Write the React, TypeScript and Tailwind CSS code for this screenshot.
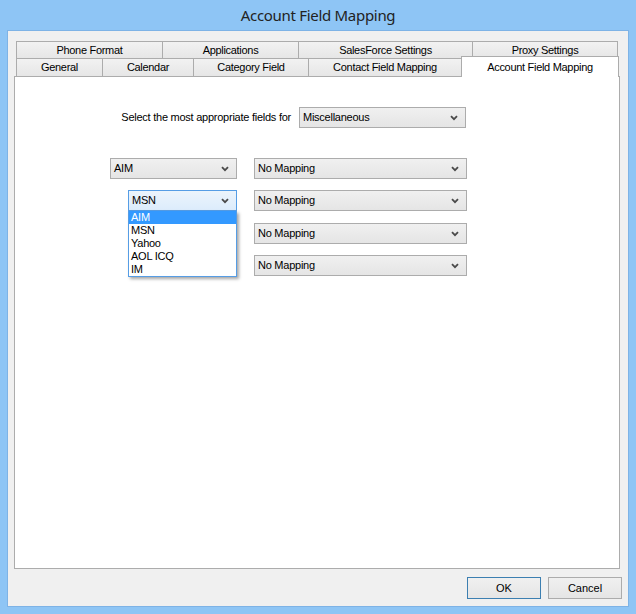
import React from "react";

const ui = { fontFamily: '"Liberation Sans", Arial, sans-serif' } as React.CSSProperties;

function Chevron() {
  return (
    <svg width="8" height="6" viewBox="0 0 8 6" className="shrink-0">
      <path d="M1 1.2 L4 4.2 L7 1.2" fill="none" stroke="#4a4a4a" strokeWidth="1.8" />
    </svg>
  );
}

function Select({ label, w, focused }: { label: string; w: string; focused?: boolean }) {
  return (
    <div
      className={`${w} h-[21px] flex items-center justify-between pl-[3px] pr-[7px] border ${
        focused
          ? "border-[#569de5] bg-gradient-to-b from-[#ecf4fc] to-[#dcecfc]"
          : "border-[#acacac] bg-gradient-to-b from-[#f0f0f0] to-[#e5e5e5]"
      } text-[11px] tracking-[-0.25px] text-black`}
    >
      <span>{label}</span>
      <Chevron />
    </div>
  );
}

function Tab({ label, w, last }: { label: string; w: string; last?: boolean }) {
  return (
    <div
      className={`${w} h-full flex items-center justify-center border-l border-t border-[#acacac] ${
        last ? "border-r" : ""
      } bg-gradient-to-b from-[#f2f2f2] to-[#e6e6e6] text-[11px] tracking-[-0.3px] text-black leading-none`}
    >
      {label}
    </div>
  );
}

export default function App() {
  return (
    <div className="w-[636px] h-[614px] bg-[#8ec5f5] flex flex-col" style={ui}>
      <div
        className="h-[30px] shrink-0 flex items-center justify-center text-[15px] text-[#222] tracking-[-0.3px]"
        style={{ fontFamily: '"Noto Sans", "Open Sans", sans-serif' }}
      >
        Account Field Mapping
      </div>
      <div className="flex-1 mx-[7px] mb-[7px] border border-[#7eb3e6] bg-[#f0f0f0] flex flex-col">
        <div className="pt-[10px] pl-[6px]">
          <div className="w-[606px] flex flex-col">
            <div className="flex ml-[2px] h-[17px]">
              <Tab label="Phone Format" w="w-[146px]" />
              <Tab label="Applications" w="w-[136px]" />
              <Tab label="SalesForce Settings" w="w-[174px]" />
              <Tab label="Proxy Settings" w="w-[146px]" last />
            </div>
            <div className="flex ml-[2px] h-[18px] items-end">
              <Tab label="General" w="w-[86px]" />
              <Tab label="Calendar" w="w-[91px]" />
              <Tab label="Category Field" w="w-[115px]" />
              <Tab label="Contact Field Mapping" w="w-[153px]" />
              <div className="w-[158px] h-[21px] -mb-px relative z-10 bg-white border-l border-t border-r border-[#acacac] flex justify-center pt-[2px] text-[11px] tracking-[-0.3px] text-black">
                Account Field Mapping
              </div>
            </div>
            <div className="h-[493px] border border-[#acacac] bg-white flex flex-col">
              <div className="mt-[30px] flex items-center">
                <div className="w-[276px] text-right text-[11px] tracking-[-0.25px] text-black">
                  Select the most appropriate fields for
                </div>
                <div className="ml-[8px]">
                  <Select label="Miscellaneous" w="w-[167px]" />
                </div>
              </div>
              <div className="mt-[30px] flex pl-[95px] gap-[17px]">
                <Select label="AIM" w="w-[127px]" />
                <Select label="No Mapping" w="w-[213px]" />
              </div>
              <div className="mt-[11px] flex pl-[113px] gap-[17px]">
                <div className="relative z-20">
                  <Select label="MSN" w="w-[109px]" focused />
                  <div className="absolute left-0 top-full w-[109px] bg-white border border-t-0 border-[#569de5] shadow-[2px_2px_3px_rgba(0,0,0,0.35)] text-[11px] tracking-[-0.25px] text-black leading-[13px]">
                    <div className="bg-[#3399ff] text-white pl-[2px] h-[13px]">AIM</div>
                    <div className="pl-[2px] h-[13px]">MSN</div>
                    <div className="pl-[2px] h-[13px]">Yahoo</div>
                    <div className="pl-[2px] h-[13px]">AOL ICQ</div>
                    <div className="pl-[2px] h-[13px]">IM</div>
                  </div>
                </div>
                <Select label="No Mapping" w="w-[213px]" />
              </div>
              <div className="mt-[12px] flex pl-[239px]">
                <Select label="No Mapping" w="w-[213px]" />
              </div>
              <div className="mt-[11px] flex pl-[239px]">
                <Select label="No Mapping" w="w-[213px]" />
              </div>
            </div>
          </div>
        </div>
        <div className="mt-[8px] flex justify-end gap-[7px] pr-[6px]">
          <div className="w-[74px] h-[22px] border border-[#3c7fb1] bg-gradient-to-b from-[#f0f0f0] to-[#e5e5e5] flex items-center justify-center text-[11px] text-black">
            OK
          </div>
          <div className="w-[74px] h-[22px] border border-[#acacac] bg-gradient-to-b from-[#f0f0f0] to-[#e5e5e5] flex items-center justify-center text-[11px] text-black">
            Cancel
          </div>
        </div>
      </div>
    </div>
  );
}
